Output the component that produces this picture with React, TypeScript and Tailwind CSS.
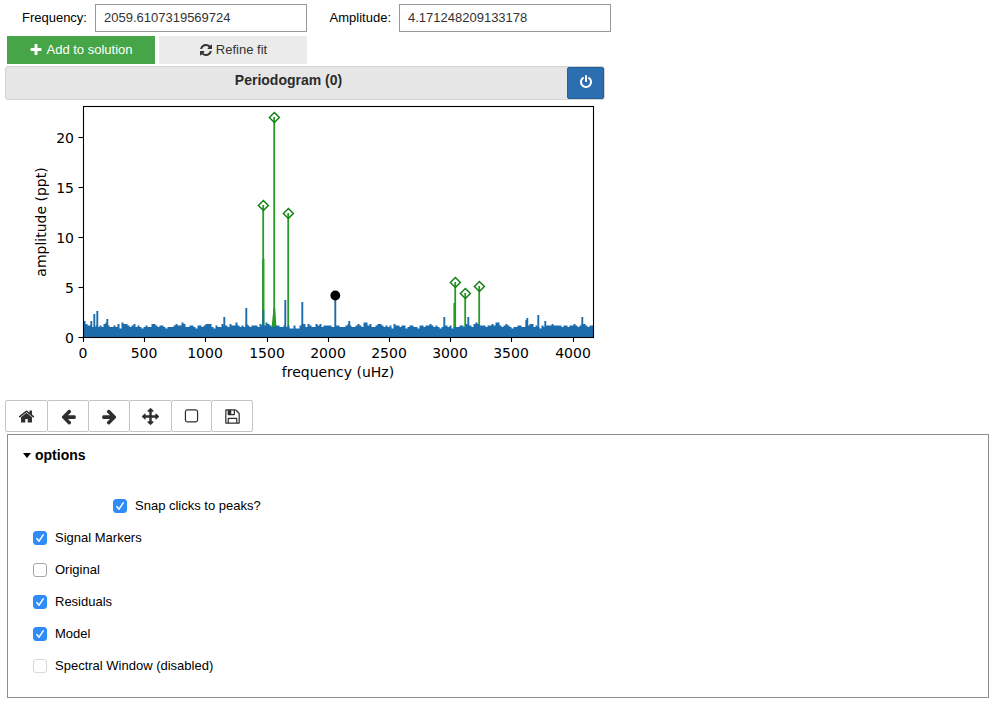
import React, { useState } from "react";

const ICONS = {
  plus: "M1600 736v192q0 40-28 68t-68 28h-416v416q0 40-28 68t-68 28h-192q-40 0-68-28t-28-68v-416h-416q-40 0-68-28t-28-68v-192q0-40 28-68t68-28h416v-416q0-40 28-68t68-28h192q40 0 68 28t28 68v416h416q40 0 68 28t28 68z",
  refresh:
    "M1639 1056q0 5-1 7-64 268-268 434.5t-478 166.5q-146 0-282.5-55t-243.5-157l-129 129q-19 19-45 19t-45-19-19-45v-448q0-26 19-45t45-19h448q26 0 45 19t19 45-19 45l-137 137q71 66 161 102t187 36q134 0 250-65t186-179q11-17 53-117 8-23 30-23h192q13 0 22.5 9.5t9.5 22.5zm25-800v448q0 26-19 45t-45 19h-448q-26 0-45-19t-19-45 19-45l138-138q-148-137-349-137-134 0-250 65t-186 179q-11 17-53 117-8 23-30 23h-199q-13 0-22.5-9.5t-9.5-22.5v-7q65-268 270-434.5t480-166.5q146 0 284 55.5t245 156.5l130-129q19-19 45-19t45 19 19 45z",
  power:
    "M1664 896q0 156-61 298t-164 245-245 164-298 61-298-61-245-164-164-245-61-298q0-182 80.5-343t226.5-270q43-32 95.5-25t83.5 50q32 42 24.5 94.5t-49.5 84.5q-98 74-151.5 181t-53.5 228q0 104 40.5 198.5t109.5 163.5 163.5 109.5 198.5 40.5 198.5-40.5 163.5-109.5 109.5-163.5 40.5-198.5q0-121-53.5-228t-151.5-181q-42-32-49.5-84.5t24.5-94.5q31-43 84-50t95 25q146 109 226.5 270t80.5 343zm-640-768v640q0 52-38 90t-90 38-90-38-38-90v-640q0-52 38-90t90-38 90 38 38 90z",
  home: "M1472 992v480q0 26-19 45t-45 19h-384v-384h-256v384h-384q-26 0-45-19t-19-45v-480q0-1 .5-3t.5-3l575-474 575 474q1 2 1 6zm223-69l-62 74q-8 9-21 11h-3q-13 0-21-7l-692-577-692 577q-12 8-24 7-13-2-21-11l-62-74q-8-10-7-23.5t11-21.5l719-599q32-26 76-26t76 26l244 204v-195q0-14 9-23t23-9h192q14 0 23 9t9 23v408l219 182q10 8 11 21.5t-7 23.5z",
  left: "M1664 896v128q0 53-32.5 90.5t-84.5 37.5h-704l293 294q38 36 38 90t-38 90l-75 76q-37 37-90 37-52 0-91-37l-651-652q-37-37-37-90 0-52 37-91l651-650q38-38 91-38 52 0 90 38l75 74q38 38 38 91t-38 91l-293 293h704q52 0 84.5 37.5t32.5 90.5z",
  right:
    "M1600 960q0 54-37 91l-651 651q-39 37-91 37-51 0-90-37l-75-75q-38-38-38-91t38-91l293-293h-704q-52 0-84.5-37.5t-32.5-90.5v-128q0-53 32.5-90.5t84.5-37.5h704l-293-294q-38-36-38-90t38-90l75-75q38-38 90-38 53 0 91 38l651 651q37 35 37 90z",
  move: "M1792 896q0 26-19 45l-256 256q-19 19-45 19t-45-19-19-45v-128h-384v384h128q26 0 45 19t19 45-19 45l-256 256q-19 19-45 19t-45-19l-256-256q-19-19-19-45t19-45 45-19h128v-384h-384v128q0 26-19 45t-45 19-45-19l-256-256q-19-19-19-45t19-45l256-256q19-19 45-19t45 19 19 45v128h384v-384h-128q-26 0-45-19t-19-45 19-45l256-256q19-19 45-19t45 19l256 256q19 19 19 45t-19 45-45 19h-128v384h384v-128q0-26 19-45t45-19 45 19l256 256q19 19 19 45z",
  square:
    "M1312 256h-832q-66 0-113 47t-47 113v832q0 66 47 113t113 47h832q66 0 113-47t47-113v-832q0-66-47-113t-113-47zm288 160v832q0 119-84.5 203.5t-203.5 84.5h-832q-119 0-203.5-84.5t-84.5-203.5v-832q0-119 84.5-203.5t203.5-84.5h832q119 0 203.5 84.5t84.5 203.5z",
  save: "M512 1536h768v-384h-768v384zm896 0h128v-896q0-14-10-38.5t-20-34.5l-281-281q-10-10-34-20t-39-10v416q0 40-28 68t-68 28h-576q-40 0-68-28t-28-68v-416h-128v1280h128v-416q0-40 28-68t68-28h832q40 0 68 28t28 68v416zm-384-928v-320q0-13-9.5-22.5t-22.5-9.5h-192q-13 0-22.5 9.5t-9.5 22.5v320q0 13 9.5 22.5t22.5 9.5h192q13 0 22.5-9.5t9.5-22.5zm640 32v928q0 40-28 68t-68 28h-1344q-40 0-68-28t-28-68v-1344q0-40 28-68t68-28h928q40 0 88 20t76 48l280 280q28 28 48 76t20 88z",
};

function Icon({ name, className }: { name: keyof typeof ICONS; className: string }) {
  return (
    <svg viewBox="0 0 1792 1792" fill="currentColor" className={className} aria-hidden="true">
      <path d={ICONS[name]} />
    </svg>
  );
}

function Field({ id, label, value }: { id: string; label: string; value: string }) {
  const [text, setText] = useState(value);
  return (
    <div className="flex items-center gap-2">
      <label htmlFor={id} className="w-20 text-right">
        {label}
      </label>
      <input
        id={id}
        value={text}
        onChange={(e) => setText(e.target.value)}
        className="h-7 w-[212px] border border-[#999] px-2 pb-[2px] text-[#333] outline-none"
      />
    </div>
  );
}

// Residual noise floor, one digit per two pixels; each step is 1.5 pixels of height.
const NOISE =
  "8655445454675445463766545645434544665455434445655764455435545666" +
  "4354465546557545465455546557654455445453353356646544656455554455" +
  "4445654456547756445665454536554553455443554556545434554534445546" +
  "5546765554556577545654344554455664543545556555545545565456654556";

const RESIDUAL_PEAKS: [number, number][] = [
  [91, 321], [94, 314], [97, 311], [107, 319], [224, 317], [246, 308], [263, 310],
  [285, 300], [302, 302], [335, 296], [349, 321], [444, 317], [468, 317], [526, 320],
  [527, 318], [538, 315], [545, 321], [582, 317],
];

const SIGNALS: [number, number][] = [
  [263, 205], [274, 117], [288, 213], [455, 282], [465, 293], [479, 286],
];

const noisePath =
  "M83.5 337" +
  NOISE.split("")
    .slice(0, 255)
    .map((d, i) => `V${333 - Number(d) * 1.5}H${85.5 + i * 2}`)
    .join("") +
  "V337Z";

function Periodogram() {
  return (
    <svg
      width="600"
      height="286"
      viewBox="5 102 600 286"
      className="block font-['DejaVu_Sans',sans-serif] text-[14px]"
      role="img"
      aria-label="Periodogram"
    >
      <path d="M262.2 328V259H264.4V328ZM271.5 328L273.5 308H275.2L276.5 328ZM453.4 328V303H455.8V328Z" fill="#279a27" />
      {SIGNALS.map(([x, y]) => (
        <path key={x} d={`M${x + 0.2} ${y}V328`} stroke="#279a27" strokeWidth="1.8" />
      ))}
      <path d={noisePath} fill="#1c6cab" />
      {RESIDUAL_PEAKS.map(([x, y]) => (
        <path key={x} d={`M${x + 0.3} ${y}V337`} stroke="#1c6cab" strokeWidth="1.9" />
      ))}
      {SIGNALS.map(([x, y]) => (
        <path
          key={x}
          d={`M${x + 0.4} ${y - 4.5}l5 5l-5 5l-5 -5Z`}
          fill="none"
          stroke="#138013"
          strokeWidth="1.5"
        />
      ))}
      <circle cx="335.3" cy="295.5" r="4.9" />
      <rect x="83.5" y="106.5" width="510" height="231" fill="none" stroke="#000" strokeWidth="1.1" />
      {[0, 500, 1000, 1500, 2000, 2500, 3000, 3500, 4000].map((v) => {
        const x = Math.round(83 + v * 0.1224) + 0.5;
        return (
          <g key={v}>
            <path d={`M${x} 337v5`} stroke="#000" strokeWidth="1.1" />
            <text x={x - 0.5} y="358" textAnchor="middle">
              {v}
            </text>
          </g>
        );
      })}
      {[0, 5, 10, 15, 20].map((v) => (
        <g key={v}>
          <path d={`M78.5 ${337.5 - v * 10}h5`} stroke="#000" strokeWidth="1.1" />
          <text x="74" y={342.5 - v * 10} textAnchor="end">
            {v}
          </text>
        </g>
      ))}
      <text x="338" y="377" textAnchor="middle">
        frequency (uHz)
      </text>
      <text transform="translate(46 222) rotate(-90)" textAnchor="middle">
        amplitude (ppt)
      </text>
    </svg>
  );
}

function Check({
  label,
  initial = false,
  disabled = false,
}: {
  label: string;
  initial?: boolean;
  disabled?: boolean;
}) {
  const [on, setOn] = useState(initial);
  return (
    <label className="flex h-8 w-fit items-center gap-2">
      <span className="relative size-[14px]">
        <input
          type="checkbox"
          checked={on}
          disabled={disabled}
          onChange={() => setOn(!on)}
          className="block size-[14px] appearance-none rounded-[3px] border border-[#a5a5a5] bg-white checked:border-[#2f8dfb] checked:bg-[#2f8dfb] disabled:border-[#d8d8d8]"
        />
        {on && (
          <svg viewBox="0 0 14 14" className="pointer-events-none absolute inset-0" aria-hidden="true">
            <path
              d="M3.8 7.6L6 10.2L10.2 3.9"
              fill="none"
              stroke="#fff"
              strokeWidth="1.5"
              strokeLinecap="round"
              strokeLinejoin="round"
            />
          </svg>
        )}
      </span>
      {label}
    </label>
  );
}

const TOOLS: { name: keyof typeof ICONS; label: string; width: string }[] = [
  { name: "home", label: "Home", width: "w-[43px]" },
  { name: "left", label: "Back", width: "w-[42px]" },
  { name: "right", label: "Forward", width: "w-[42px]" },
  { name: "move", label: "Pan", width: "w-[43px]" },
  { name: "square", label: "Zoom", width: "w-[41px]" },
  { name: "save", label: "Download", width: "w-[42px]" },
];

export default function App() {
  return (
    <main className="bg-white px-[5px] pt-1 pb-1 font-['Liberation_Sans',Arial,sans-serif] text-[13px] leading-4 text-black">
      <div className="flex flex-wrap gap-1 px-[2px]">
        <Field id="frequency" label="Frequency:" value="2059.6107319569724" />
        <Field id="amplitude" label="Amplitude:" value="4.171248209133178" />
      </div>

      <div className="mt-1 flex gap-1 px-[2px]">
        <button className="flex h-7 w-[148px] items-center justify-center gap-[3px] bg-[#46a546] text-white">
          <Icon name="plus" className="size-[14px]" />
          Add to solution
        </button>
        <button className="flex h-7 w-[148px] items-center justify-center gap-[3px] bg-[#ebebeb] text-[#333]">
          <Icon name="refresh" className="size-[14px]" />
          Refine fit
        </button>
      </div>

      <section className="max-w-[600px]">
        <header className="mt-[2px] flex h-[34px] rounded-[3px] border border-[#d3d3d3] bg-[#e6e6e6]">
          <h1 className="flex-1 pt-[5px] pl-1 text-center text-sm leading-4 font-bold text-[#2b2b2b]">
            Periodogram (0)
          </h1>
          <button
            aria-label="Stop interaction"
            className="flex h-8 w-[37px] items-center justify-center rounded-[2px] border border-[#245f9c] bg-[#2b6fb0] pb-[2px] text-white"
          >
            <Icon name="power" className="size-[14px]" />
          </button>
        </header>
        <div className="mt-[2px]">
          <Periodogram />
        </div>
      </section>

      <div className="mt-3 flex">
        {TOOLS.map((t) => (
          <button
            key={t.name}
            aria-label={t.label}
            className={`${t.width} -mr-px flex h-8 items-center justify-center rounded-[2px] border border-[#c4c4c4] text-[#2e2e2e]`}
          >
            <Icon name={t.name} className="size-[17px]" />
          </button>
        ))}
      </div>

      <details open className="-mr-px mt-[2px] ml-[2px] border border-[#8f8f8f] px-[15px] pt-3 pb-[15px]">
        <summary className="flex w-fit list-none items-center gap-1 text-sm leading-4 font-bold">
          <svg viewBox="0 0 8 5" className="h-[5px] w-2" aria-hidden="true">
            <path d="M0 0H8L4 5Z" />
          </svg>
          options
        </summary>
        <div className="mt-[27px] pl-[10px]">
          <div className="pl-20">
            <Check label="Snap clicks to peaks?" initial />
          </div>
          <Check label="Signal Markers" initial />
          <Check label="Original" />
          <Check label="Residuals" initial />
          <Check label="Model" initial />
          <Check label="Spectral Window (disabled)" disabled />
        </div>
      </details>
    </main>
  );
}
